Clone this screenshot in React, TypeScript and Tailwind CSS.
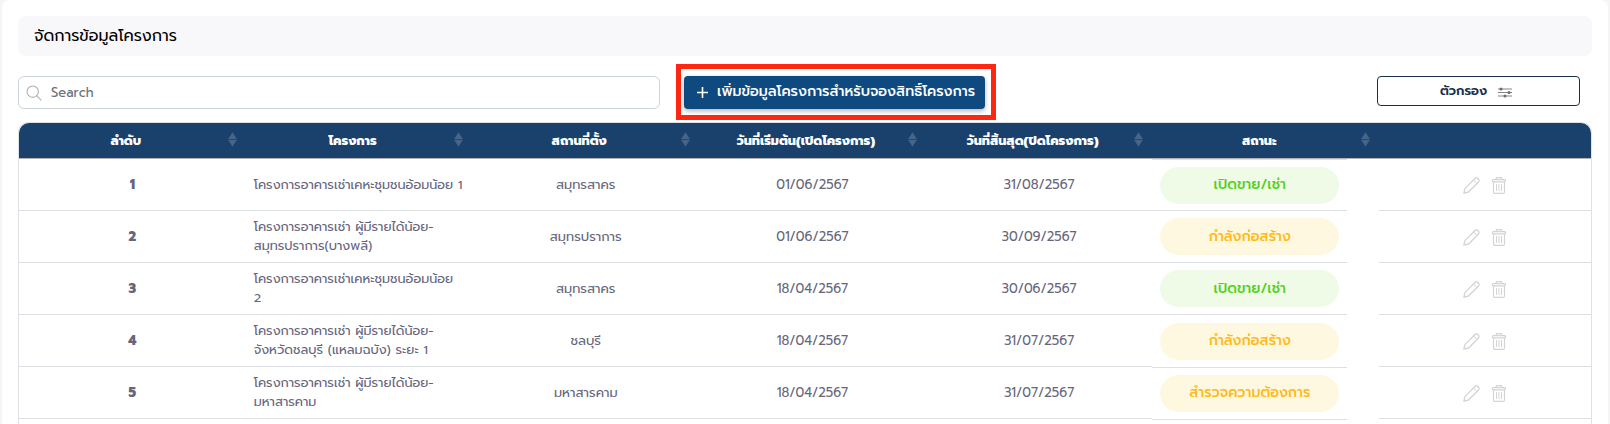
import React from "react";

type Row = {
  no: number;
  name: string[];
  place: string;
  start: string;
  end: string;
  status: string;
  pill: string;
  cell: string;
};

const green = "bg-[#effbe7] text-[#52d01c]";
const amber = "bg-[#fff8e0] text-[#ffb914]";

const rows: Row[] = [
  { no: 1, name: ["โครงการอาคารเช่าเคหะชุมชนอ้อมน้อย 1"], place: "สมุทรสาคร", start: "01/06/2567", end: "31/08/2567", status: "เปิดขาย/เช่า", pill: green, cell: "border-t" },
  { no: 2, name: ["โครงการอาคารเช่า ผู้มีรายได้น้อย-", "สมุทรปราการ(บางพลี)"], place: "สมุทรปราการ", start: "01/06/2567", end: "30/09/2567", status: "กำลังก่อสร้าง", pill: amber, cell: "" },
  { no: 3, name: ["โครงการอาคารเช่าเคหะชุมชนอ้อมน้อย", "2"], place: "สมุทรสาคร", start: "18/04/2567", end: "30/06/2567", status: "เปิดขาย/เช่า", pill: green, cell: "" },
  { no: 4, name: ["โครงการอาคารเช่า ผู้มีรายได้น้อย-", "จังหวัดชลบุรี (แหลมฉบัง) ระยะ 1"], place: "ชลบุรี", start: "18/04/2567", end: "31/07/2567", status: "กำลังก่อสร้าง", pill: amber, cell: "-mb-px" },
  { no: 5, name: ["โครงการอาคารเช่า ผู้มีรายได้น้อย-", "มหาสารคาม"], place: "มหาสารคาม", start: "18/04/2567", end: "31/07/2567", status: "สำรวจความต้องการ", pill: amber, cell: "-mb-px" },
];

const heads = ["ลำดับ", "โครงการ", "สถานที่ตั้ง", "วันที่เริ่มต้น(เปิดโครงการ)", "วันที่สิ้นสุด(ปิดโครงการ)", "สถานะ"];

const cols = "grid grid-cols-[226.7px_226.7px_226.7px_226.7px_226.7px_226.7px_1fr]";

function SortIcon() {
  return (
    <svg width="9" height="15" viewBox="0 0 9 15" className="mb-0.5 shrink-0" fill="#446489">
      <path d="M4.5 0.2 8.9 7H.1z" />
      <path d="M4.5 14.8 8.9 7.8H.1z" />
    </svg>
  );
}

function SearchIcon() {
  return (
    <svg width="16" height="16" viewBox="0 0 16 16" fill="none" stroke="#aeaebb" strokeWidth="1.1" strokeLinecap="round">
      <circle cx="6.7" cy="6.7" r="5.7" />
      <path d="m10.8 10.9 4.2 4.2" />
    </svg>
  );
}

function FilterIcon() {
  return (
    <svg width="14" height="11" viewBox="0 0 14 11" fill="none" stroke="#858585" strokeWidth="1.1">
      <path d="M0 2h14M0 5.5h14M0 9h14" />
      <g fill="#6b6b6b" stroke="none">
        <circle cx="3" cy="2" r="1.5" />
        <circle cx="11" cy="5.5" r="1.5" />
        <circle cx="7" cy="9" r="1.5" />
      </g>
    </svg>
  );
}

function PencilIcon() {
  return (
    <svg width="17" height="17" viewBox="0 0 17 17" fill="none" stroke="#d4d4d4" strokeWidth="1.3" strokeLinejoin="round">
      <path d="M.9 16.1 2 11.4 11.7 1.7a2.3 2.3 0 0 1 3.3 0l.3.3a2.3 2.3 0 0 1 0 3.3L5.6 15z" />
      <path d="m10.4 3 3.6 3.6" strokeWidth="1" />
    </svg>
  );
}

function TrashIcon() {
  return (
    <svg width="14" height="17" viewBox="0 0 14 17" fill="none" stroke="#d4d4d4" strokeWidth="1.2" strokeLinejoin="round">
      <path d="M4.2 2.7V1.4c0-.5.3-.8.8-.8h4c.5 0 .8.3.8.8v1.3" />
      <rect x=".6" y="2.7" width="12.8" height="2.1" rx=".6" />
      <path d="M1.5 4.8v10.3c0 .8.5 1.3 1.3 1.3h8.4c.8 0 1.3-.5 1.3-1.3V4.8" />
      <path d="M4.5 6.9v7M7 6.9v7M9.5 6.9v7" strokeWidth="1" />
    </svg>
  );
}

export default function App() {
  return (
    <div className="h-[424px] overflow-hidden bg-[#f5f5f5] px-0.5 font-['Prompt','Noto_Sans_Thai','Inter',sans-serif]">
      <main className="h-[440px] rounded-lg bg-white px-4 pt-4">
        <header className="flex h-10 items-center rounded-lg bg-[#f8f8fb] pl-4">
          <h1 className="whitespace-nowrap text-base text-black">จัดการข้อมูลโครงการ</h1>
        </header>

        <div className="mt-2 flex h-14 items-start">
          <label className="mt-3 flex h-[33px] w-[642px] items-center rounded-md border border-[#ced4de] pl-[7px]">
            <SearchIcon />
            <span className="ml-[9px] text-[13px] text-[#6a6f7a]">Search</span>
          </label>
          <div className="ml-4 h-14 w-[320px] border-[5px] border-[#ff2712] pl-[3px] pt-[7px]">
            <button className="flex h-[33px] w-[301px] items-center rounded bg-[#0e4a80] pl-[13px] text-white shadow-[0_2px_5px_rgba(0,0,0,0.3)]">
              <svg width="11" height="11" viewBox="0 0 11 11" stroke="white" strokeWidth="1.6"><path d="M5.5 0v11M0 5.5h11" /></svg>
              <span className="mb-0.5 ml-[9px] whitespace-nowrap text-[14.2px] font-medium">เพิ่มข้อมูลโครงการสำหรับจองสิทธิ์โครงการ</span>
            </button>
          </div>
          <button className="ml-auto mr-3 mt-3 flex h-[30px] w-[203px] items-center rounded border border-[#17304f] pl-[62px] text-[#17304f]">
            <span className="whitespace-nowrap text-[12.8px] font-semibold">ตัวกรอง</span>
            <span className="ml-[11px] mt-[3px]"><FilterIcon /></span>
          </button>
        </div>

        <section className="mt-0.5 h-[310px] rounded-t-[10px] border-x border-t border-[#dfe1e6]">
          <div className={`${cols} h-9 rounded-t-[10px] border-b border-[#b3b3b6] bg-[#19416c]`}>
            {heads.map((h) => (
              <div key={h} className="flex items-center pr-[9px]">
                <span className="flex-1 whitespace-nowrap pl-[5px] pt-0.5 text-center text-[12.6px] font-extrabold text-white">{h}</span>
                <SortIcon />
              </div>
            ))}
          </div>
          {rows.map((r) => (
            <div key={r.no} className={`${cols} h-[52px] text-[13px] text-[#65657b]`}>
              <div className="flex items-center justify-center border-b border-[#dcdfe4] font-extrabold">{r.no}</div>
              <div className="flex flex-col justify-center border-b border-[#dcdfe4] pb-px pl-2 text-[12.8px] leading-[19px]">
                {r.name.map((l) => (
                  <span key={l} className="whitespace-nowrap">{l}</span>
                ))}
              </div>
              <div className="flex items-center justify-center whitespace-nowrap border-b border-[#dcdfe4]">{r.place}</div>
              <div className="flex items-center justify-center border-b border-[#dcdfe4]">{r.start}</div>
              <div className="flex items-center justify-center border-b border-[#dcdfe4]">{r.end}</div>
              <div className={`mr-8 flex items-center justify-center border-b border-[#dcdfe4] ${r.cell}`}>
                <span className={`flex h-[37px] w-[179px] items-center justify-center rounded-full text-[14.2px] font-medium ${r.pill}`}>{r.status}</span>
              </div>
              <div className="flex items-center justify-center gap-3 border-b border-[#dcdfe4] pr-0.5 pt-0.5">
                <PencilIcon />
                <TrashIcon />
              </div>
            </div>
          ))}
        </section>
      </main>
    </div>
  );
}
